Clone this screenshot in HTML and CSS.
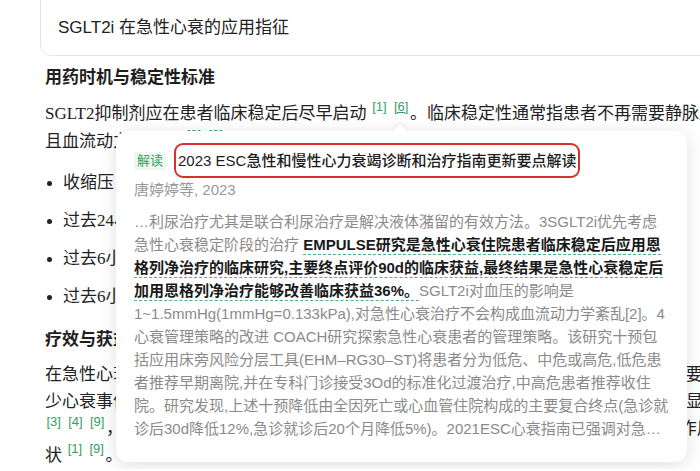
FILE: index.html
```html
<!DOCTYPE html>
<html lang="zh-CN">
<head>
    <meta charset="UTF-8">
    <meta name="viewport" content="width=device-width, initial-scale=1.0">
    <title>SGLT2i 在急性心衰的应用指征</title>
    <link rel="stylesheet" href="styles.css">
</head>
<body>
<div class="page">
    <div class="query">SGLT2i 在急性心衰的应用指征</div>

    <h3>用药时机与稳定性标准</h3>
    <p class="para">SGLT2抑制剂应在患者临床稳定后尽早启动 <sup class="ref">[1]</sup> <sup class="ref active">[6]</sup>。临床稳定性通常指患者不再需要静脉血管活性药物，<br>且血流动力学稳定 <sup class="ref">[2]</sup> <sup class="ref">[3]</sup>。具体标准包括：</p>

    <ul class="criteria">
        <li>收缩压 ≥100mmHg，且无低血压症状</li>
        <li>过去24小时内未增加静脉利尿剂剂量</li>
        <li>过去6小时内未使用静脉血管扩张剂</li>
        <li>过去6小时内未使用静脉正性肌力药物</li>
    </ul>

    <h3>疗效与获益</h3>
    <p class="para tight">在急性心衰患者中，SGLT2i可使全因死亡或心衰事件风险降低约3成，获益显著，故需要<br>少心衰事件的发生，随机研究均证实SGLT2i能使心衰住院风险在1年内降低，且获益明显<br><sup class="ref">[3]</sup> <sup class="ref">[4]</sup> <sup class="ref">[9]</sup>，还能改善患者生活质量和6 分钟步行距离，并发挥一定程度的渗透性利尿的作用<br>状 <sup class="ref">[1]</sup> <sup class="ref">[9]</sup>。</p>

    <!-- 引用 [6] 的悬浮卡片 -->
    <div class="popup">
        <div class="popup-head">
            <span class="tag">解读</span>
            <span class="title">2023 ESC急性和慢性心力衰竭诊断和治疗指南更新要点解读</span>
        </div>
        <div class="authors">唐婷婷等, 2023</div>
        <div class="excerpt">…利尿治疗尤其是联合利尿治疗是解决液体潴留的有效方法。3SGLT2i优先考虑<br>急性心衰稳定阶段的治疗 <span class="hl">EMPULSE研究是急性心衰住院患者临床稳定后应用恩<br>格列净治疗的临床研究,主要终点评价90d的临床获益,最终结果是急性心衰稳定后<br>加用恩格列净治疗能够改善临床获益36%。</span>SGLT2i对血压的影响是<br>1~1.5mmHg(1mmHg=0.133kPa),对急性心衰治疗不会构成血流动力学紊乱[2]。4<br>心衰管理策略的改进 COACH研究探索急性心衰患者的管理策略。该研究十预包<br>括应用床旁风险分层工具(EHM–RG30–ST)将患者分为低危、中危或高危,低危患<br>者推荐早期离院,并在专科门诊接受3Od的标准化过渡治疗,中高危患者推荐收住<br>院。研究发现,上述十预降低由全因死亡或心血管住院构成的主要复合终点(急诊就<br>诊后30d降低12%,急诊就诊后20个月降低5%)。2021ESC心衰指南已强调对急…</div>
    </div>
</div>
</body>
</html>
```

FILE: styles.css
```css
/* página */
body {
    margin: 0;
    background-color: #fff;
    color: #222;
    font-family: "Liberation Serif", "Noto Sans CJK SC", serif;
    overflow: hidden;
}
.page {
    position: relative;
    display: flow-root;
    width: 900px;
    padding-left: 45px;
}

/* caixa da pergunta */
.query {
    margin: -20px 0 0 -5px;
    padding: 35px 17px 15px;
    border: 1px solid #e4e4e4;
    border-radius: 12px;
    font-family: "Liberation Sans", "Noto Sans CJK SC", sans-serif;
    font-size: 17px;
    line-height: 24px;
    color: #222;
}

h3 {
    margin: 10px 0 0;
    font-family: "Liberation Sans", "Noto Sans CJK SC", sans-serif;
    font-size: 17px;
    line-height: 24px;
    font-weight: bold;
    color: #1e1e1e;
}
h3 + .para {
    margin-top: 10px;
}

.para {
    margin: 0;
    font-size: 17px;
    line-height: 28px;
    white-space: nowrap;
}
.para.tight {
    line-height: 27px;
}
h3 + .para.tight {
    margin-top: 9px;
}

.ref {
    padding: 0 1.5px;
    font-family: "Liberation Sans", sans-serif;
    font-size: 13px;
    line-height: 0;
    vertical-align: 8px;
    color: #35a062;
}
.ref.active {
    text-decoration: underline;
}

.criteria {
    list-style: none;
    margin: 13px 0 17px;
    padding: 0;
    display: flex;
    flex-direction: column;
    gap: 10px;
}
.criteria li {
    display: flex;
    align-items: center;
    font-size: 17px;
    line-height: 28px;
    white-space: nowrap;
}
.criteria li::before {
    content: "";
    width: 5px;
    height: 5px;
    border-radius: 50%;
    background-color: #222;
    margin: 0 11px 0 2px;
}
.criteria + h3 {
    margin-top: 17px;
}

/* cartão flutuante */
.popup {
    position: absolute;
    left: 116px;
    top: 131px;
    width: 571px;
    box-sizing: border-box;
    padding: 12px 18px 22px;
    background-color: #fff;
    border-radius: 12px;
    box-shadow: 0 3px 18px rgba(0, 0, 0, 0.13);
    font-family: "Liberation Sans", "Noto Sans CJK SC", sans-serif;
}
.popup::before {
    content: "";
    position: absolute;
    top: -5px;
    left: 279px;
    width: 10px;
    height: 10px;
    background-color: #fff;
    transform: rotate(45deg);
    box-shadow: -2px -2px 4px rgba(0, 0, 0, 0.05);
}
.popup-head {
    display: flex;
    align-items: center;
    gap: 8px;
}
.tag {
    padding: 0 3px;
    font-size: 13px;
    line-height: 18px;
    color: #37a05c;
    background-color: #eef8f0;
    border-radius: 3px;
}
.title {
    padding: 0 2px;
    border: 2px solid #d8302e;
    border-radius: 9px;
    font-size: 15px;
    line-height: 31px;
    font-weight: 500;
    color: #1c1c1c;
    white-space: nowrap;
}
.authors {
    margin-top: 1px;
    font-size: 15px;
    line-height: 22px;
    color: #999;
}
.excerpt {
    margin-top: 9px;
    font-size: 15px;
    line-height: 23px;
    color: #8a8a8a;
    white-space: nowrap;
}
.hl {
    color: #1a1a1a;
    font-weight: bold;
    padding-bottom: 1px;
    border-bottom: 1px dashed #4fb08a;
}
```
